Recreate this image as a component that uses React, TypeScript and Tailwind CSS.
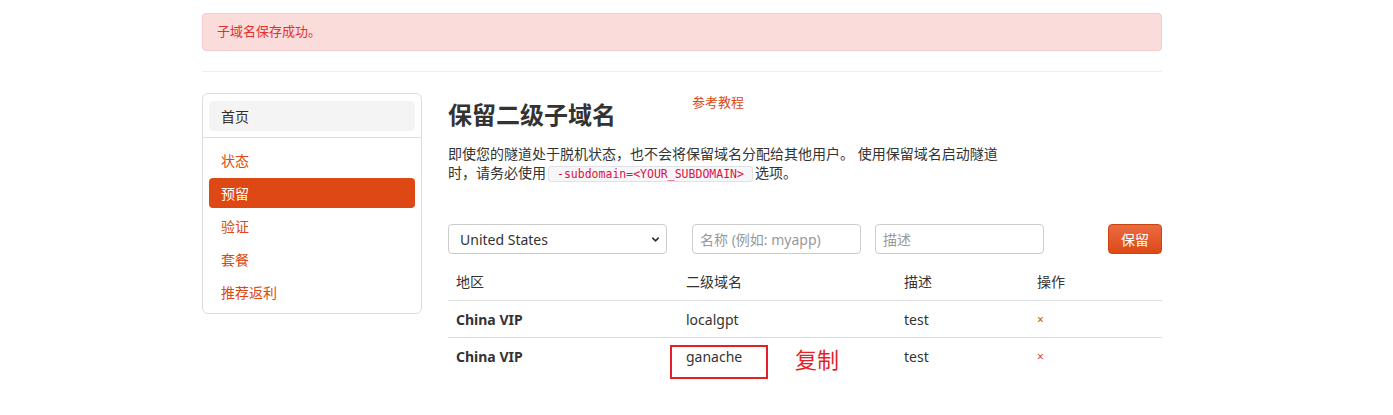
import { ChevronDown } from 'lucide-react'

const NAV = [
  { label: '状态', active: false },
  { label: '预留', active: true },
  { label: '验证', active: false },
  { label: '套餐', active: false },
  { label: '推荐返利', active: false },
]

const ROWS = [
  { region: 'China VIP', name: 'localgpt', desc: 'test', marked: false },
  { region: 'China VIP', name: 'ganache', desc: 'test', marked: true },
]

export default function App() {
  return (
    <div className="min-h-[415px] bg-white text-[#333] text-[14px]" style={{ fontFamily: '"Noto Sans", "Noto Sans CJK SC", sans-serif' }}>
      <div className="ml-[202px] w-[960px] pt-[13px]">
        <div className="h-[38px] flex items-center px-[14px] rounded-[4px] border border-[#f6c9cb] bg-[#fadcdb] text-[#e3312c] text-[13px]">
          子域名保存成功。
        </div>
        <div className="mt-[20px] h-px bg-[#eeeeee]" />

        <div className="mt-[21px] flex gap-[26px]">
          {/* sidebar */}
          <div className="w-[220px] shrink-0 self-start rounded-[6px] border border-[#dddddd] pt-[7px] pb-[6px]">
            <div className="mx-[6px] h-[30px] flex items-center px-[12px] rounded-[4px] bg-[#f4f4f4] text-[#3a2a22]">首页</div>
            <div className="mt-[6px] h-px bg-[#dddddd]" />
            <div className="mt-[7px] flex flex-col gap-[3px] px-[6px]">
              {NAV.map(n => (
                <div
                  key={n.label}
                  className={`h-[30px] flex items-center px-[12px] rounded-[4px] ${n.active ? 'bg-[#dd4814] text-white' : 'text-[#dd4814]'}`}
                >
                  {n.label}
                </div>
              ))}
            </div>
          </div>

          {/* main */}
          <div className="flex-1">
            <div className="relative">
              <h1 className="pt-[5px] text-[24px] font-bold leading-[34px] text-[#333]">保留二级子域名</h1>
              <a className="absolute left-[244px] top-0 text-[13px] text-[#dd4814]">参考教程</a>
            </div>
            <p className="mt-[12px] w-[556px] leading-[19px]">
              <span>即使您的隧道处于脱机状态，也不会将保留域名分配给其他用户。 使用保留域名启动隧道</span>
              <br />
              <span>时，请务必使用</span>
              <code
                className="mx-[2px] px-[8px] py-0 rounded-[3px] border border-[#e1e1e8] bg-[#f7f7f9] text-[#dd1144] text-[11.5px] leading-[16px]"
                style={{ fontFamily: '"DejaVu Sans Mono", "Liberation Mono", monospace' }}
              >
                -subdomain=&lt;YOUR_SUBDOMAIN&gt;
              </code>
              <span>选项。</span>
            </p>

            <div className="mt-[42px] flex items-center h-[30px]">
              <div className="relative w-[219px] h-[30px]">
                <select className="appearance-none w-full h-full rounded-[4px] border border-[#cccccc] bg-white pl-[11px] text-[14px] text-[#333]">
                  <option>United States</option>
                </select>
                <ChevronDown className="absolute right-[6px] top-[10px] w-[11px] h-[11px] text-[#333]" strokeWidth={3.5} />
              </div>
              <input
                className="ml-[25px] w-[169px] h-[30px] rounded-[4px] border border-[#cccccc] px-[7px] text-[14px] placeholder:text-[#999]"
                placeholder="名称 (例如: myapp)"
              />
              <input
                className="ml-[14px] w-[169px] h-[30px] rounded-[4px] border border-[#cccccc] px-[7px] text-[14px] placeholder:text-[#999]"
                placeholder="描述"
              />
              <button className="ml-auto w-[54px] h-[30px] rounded-[4px] border border-[#c9440f] bg-gradient-to-b from-[#ea6b40] to-[#dd4814] text-white text-[14px]">
                保留
              </button>
            </div>

            <table className="mt-[12px] w-full border-collapse">
              <thead>
                <tr className="border-b border-[#dddddd]">
                  <th className="w-[230px] text-left font-normal px-[8px] pt-[6px] pb-[8px] leading-[20px]">地区</th>
                  <th className="w-[218px] text-left font-normal px-[8px] pt-[6px] pb-[8px] leading-[20px]">二级域名</th>
                  <th className="w-[133px] text-left font-normal px-[8px] pt-[6px] pb-[8px] leading-[20px]">描述</th>
                  <th className="text-left font-normal px-[8px] pt-[6px] pb-[8px] leading-[20px]">操作</th>
                </tr>
              </thead>
              <tbody>
                {ROWS.map(r => (
                  <tr key={r.name} className={r.marked ? '' : 'border-b border-[#dddddd]'}>
                    <td className="px-[8px] pt-[9px] pb-[7px] leading-[20px] font-bold">{r.region}</td>
                    <td className="px-[8px] pt-[9px] pb-[7px] leading-[20px]">
                      <div className="relative">
                        {r.name}
                        {r.marked && (
                          <>
                            <div className="absolute left-[-16px] top-[-2px] w-[98px] h-[34px] border-2 border-[#e51f28]" />
                            <div className="absolute left-[109px] top-[-4px] text-[22px] leading-[32px] text-[#e51f28]">复制</div>
                          </>
                        )}
                      </div>
                    </td>
                    <td className="px-[8px] pt-[9px] pb-[7px] leading-[20px]">{r.desc}</td>
                    <td className="px-[8px] pt-[9px] pb-[7px] leading-[20px] text-[12px] text-[#dd4814]">×</td>
                  </tr>
                ))}
              </tbody>
            </table>
          </div>
        </div>
      </div>
    </div>
  )
}
